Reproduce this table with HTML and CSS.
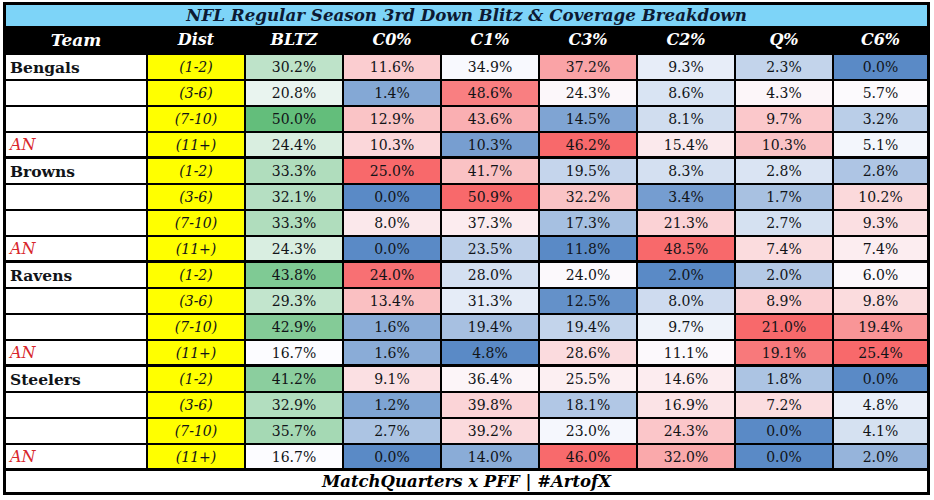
FILE: index.html
```html
<!DOCTYPE html>
<html lang="en">
<head>
<meta charset="utf-8">
<title>NFL Regular Season 3rd Down Blitz &amp; Coverage Breakdown</title>
<link rel="stylesheet" href="styles.css">
</head>
<body>
<div class="sheet">
  <div class="title">NFL Regular Season 3rd Down Blitz &amp; Coverage Breakdown</div>
  <div class="row head">
    <div>Team</div><div>Dist</div><div>BLTZ</div><div>C0%</div><div>C1%</div><div>C3%</div><div>C2%</div><div>Q%</div><div>C6%</div>
  </div>

  <div class="group">
    <div class="row"><div class="team">Bengals</div><div class="dist">(1-2)</div><div class="v">30.2%</div><div class="v">11.6%</div><div class="v">34.9%</div><div class="v">37.2%</div><div class="v">9.3%</div><div class="v">2.3%</div><div class="v">0.0%</div></div>
    <div class="row"><div class="team"></div><div class="dist">(3-6)</div><div class="v">20.8%</div><div class="v">1.4%</div><div class="v">48.6%</div><div class="v">24.3%</div><div class="v">8.6%</div><div class="v">4.3%</div><div class="v">5.7%</div></div>
    <div class="row"><div class="team"></div><div class="dist">(7-10)</div><div class="v">50.0%</div><div class="v">12.9%</div><div class="v">43.6%</div><div class="v">14.5%</div><div class="v">8.1%</div><div class="v">9.7%</div><div class="v">3.2%</div></div>
    <div class="row"><div class="team an">AN</div><div class="dist">(11+)</div><div class="v">24.4%</div><div class="v">10.3%</div><div class="v">10.3%</div><div class="v">46.2%</div><div class="v">15.4%</div><div class="v">10.3%</div><div class="v">5.1%</div></div>
  </div>

  <div class="group">
    <div class="row"><div class="team">Browns</div><div class="dist">(1-2)</div><div class="v">33.3%</div><div class="v">25.0%</div><div class="v">41.7%</div><div class="v">19.5%</div><div class="v">8.3%</div><div class="v">2.8%</div><div class="v">2.8%</div></div>
    <div class="row"><div class="team"></div><div class="dist">(3-6)</div><div class="v">32.1%</div><div class="v">0.0%</div><div class="v">50.9%</div><div class="v">32.2%</div><div class="v">3.4%</div><div class="v">1.7%</div><div class="v">10.2%</div></div>
    <div class="row"><div class="team"></div><div class="dist">(7-10)</div><div class="v">33.3%</div><div class="v">8.0%</div><div class="v">37.3%</div><div class="v">17.3%</div><div class="v">21.3%</div><div class="v">2.7%</div><div class="v">9.3%</div></div>
    <div class="row"><div class="team an">AN</div><div class="dist">(11+)</div><div class="v">24.3%</div><div class="v">0.0%</div><div class="v">23.5%</div><div class="v">11.8%</div><div class="v">48.5%</div><div class="v">7.4%</div><div class="v">7.4%</div></div>
  </div>

  <div class="group">
    <div class="row"><div class="team">Ravens</div><div class="dist">(1-2)</div><div class="v">43.8%</div><div class="v">24.0%</div><div class="v">28.0%</div><div class="v">24.0%</div><div class="v">2.0%</div><div class="v">2.0%</div><div class="v">6.0%</div></div>
    <div class="row"><div class="team"></div><div class="dist">(3-6)</div><div class="v">29.3%</div><div class="v">13.4%</div><div class="v">31.3%</div><div class="v">12.5%</div><div class="v">8.0%</div><div class="v">8.9%</div><div class="v">9.8%</div></div>
    <div class="row"><div class="team"></div><div class="dist">(7-10)</div><div class="v">42.9%</div><div class="v">1.6%</div><div class="v">19.4%</div><div class="v">19.4%</div><div class="v">9.7%</div><div class="v">21.0%</div><div class="v">19.4%</div></div>
    <div class="row"><div class="team an">AN</div><div class="dist">(11+)</div><div class="v">16.7%</div><div class="v">1.6%</div><div class="v">4.8%</div><div class="v">28.6%</div><div class="v">11.1%</div><div class="v">19.1%</div><div class="v">25.4%</div></div>
  </div>

  <div class="group">
    <div class="row"><div class="team">Steelers</div><div class="dist">(1-2)</div><div class="v">41.2%</div><div class="v">9.1%</div><div class="v">36.4%</div><div class="v">25.5%</div><div class="v">14.6%</div><div class="v">1.8%</div><div class="v">0.0%</div></div>
    <div class="row"><div class="team"></div><div class="dist">(3-6)</div><div class="v">32.9%</div><div class="v">1.2%</div><div class="v">39.8%</div><div class="v">18.1%</div><div class="v">16.9%</div><div class="v">7.2%</div><div class="v">4.8%</div></div>
    <div class="row"><div class="team"></div><div class="dist">(7-10)</div><div class="v">35.7%</div><div class="v">2.7%</div><div class="v">39.2%</div><div class="v">23.0%</div><div class="v">24.3%</div><div class="v">0.0%</div><div class="v">4.1%</div></div>
    <div class="row"><div class="team an">AN</div><div class="dist">(11+)</div><div class="v">16.7%</div><div class="v">0.0%</div><div class="v">14.0%</div><div class="v">46.0%</div><div class="v">32.0%</div><div class="v">0.0%</div><div class="v">2.0%</div></div>
  </div>

  <div class="footer">MatchQuarters x PFF | #ArtofX</div>
</div>
<script src="script.js"></script>
</body>
</html>
```

FILE: styles.css
```css
body {
  margin: 0;
  background: #ffffff;
  font-family: "DejaVu Serif", "Liberation Serif", serif;
  color: #111418;
}

.sheet {
  margin: 2px 0 0 3px;
  width: 921px;
  padding: 3px;
  background: #000;
}

.title {
  height: 21px;
  background: #7dd4f8;
  color: #0c1a33;
  font-weight: bold;
  font-style: italic;
  font-size: 16.7px;
  line-height: 21px;
  text-align: center;
}

.row {
  display: grid;
  grid-template-columns: 140px repeat(7, 96px) 93px;
  column-gap: 2px;
  height: 24px;
  margin-bottom: 2px;
}

.row > div {
  display: flex;
  align-items: center;
  justify-content: center;
  background: #fff;
  font-size: 14px;
}

.head {
  height: 27px;
}

.head > div {
  background: #000;
  color: #fff;
  font-weight: bold;
  font-style: italic;
  font-size: 16px;
}

.head > div:first-child {
  font-size: 17px;
}

.group .row:last-child {
  height: 23px;
  margin-bottom: 3px;
}

.row > .team {
  justify-content: flex-start;
  padding-left: 4px;
  font-weight: bold;
  font-size: 15.5px;
}

.row > .an {
  color: #d8262c;
  font-weight: normal;
  font-style: italic;
  font-size: 16px;
}

.row > .dist {
  background: #ffff00;
  font-style: italic;
}

.footer {
  height: 21px;
  background: #fff;
  color: #000;
  font-weight: bold;
  font-style: italic;
  font-size: 16.5px;
  line-height: 21px;
  text-align: center;
}
```

FILE: script.js
```js
(function () {
  var RED = [248, 105, 107], WHITE = [252, 252, 255], BLUE = [90, 138, 198], GREEN = [99, 190, 123];
  function mix(a, b, t) {
    return 'rgb(' + a.map(function (v, i) { return Math.round(v + (b[i] - v) * t); }).join(',') + ')';
  }
  var rows = document.querySelectorAll('.group .row');
  var cols = [];
  rows.forEach(function (r) {
    r.querySelectorAll('.v').forEach(function (c, i) {
      (cols[i] = cols[i] || []).push(c);
    });
  });
  cols.forEach(function (cells, i) {
    var vals = cells.map(function (c) { return parseFloat(c.textContent); });
    var s = vals.slice().sort(function (a, b) { return a - b; });
    var min = s[0], max = s[s.length - 1];
    var n = s.length, med = n % 2 ? s[(n - 1) / 2] : (s[n / 2 - 1] + s[n / 2]) / 2;
    cells.forEach(function (c, k) {
      var v = vals[k], col;
      if (i === 0) {
        col = mix(WHITE, GREEN, max > min ? (v - min) / (max - min) : 0);
      } else if (v <= med) {
        col = mix(BLUE, WHITE, med > min ? (v - min) / (med - min) : 1);
      } else {
        col = mix(WHITE, RED, max > med ? (v - med) / (max - med) : 0);
      }
      c.style.background = col;
    });
  });
})();
```
